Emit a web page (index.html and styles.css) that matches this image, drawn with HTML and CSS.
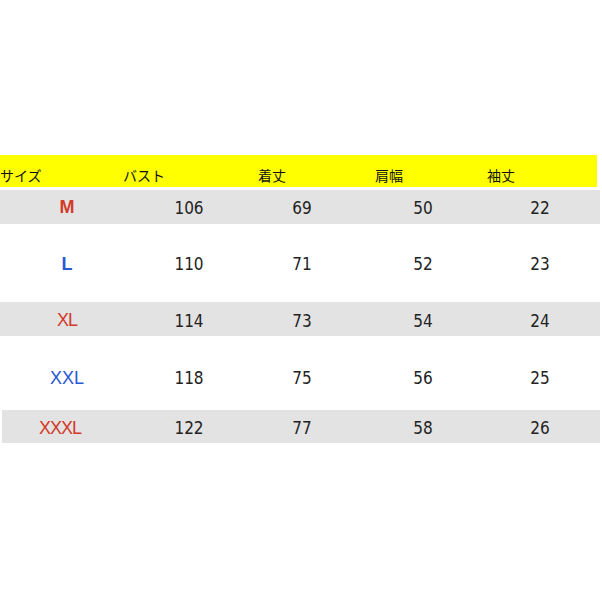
FILE: index.html
```html
<!DOCTYPE html>
<html lang="ja">
<head>
<meta charset="utf-8">
<link rel="stylesheet" href="styles.css">
</head>
<body>
<div class="sheet">
  <div class="head">
    <span class="h h1">サイズ</span>
    <span class="h h2">バスト</span>
    <span class="h h3">着丈</span>
    <span class="h h4">肩幅</span>
    <span class="h h5">袖丈</span>
  </div>
  <div class="row grey r-m">
    <span class="size red">M</span><span>106</span><span>69</span><span>50</span><span>22</span>
  </div>
  <div class="row white r-l">
    <span class="size blue">L</span><span>110</span><span>71</span><span>52</span><span>23</span>
  </div>
  <div class="row grey r-xl">
    <span class="size red">XL</span><span>114</span><span>73</span><span>54</span><span>24</span>
  </div>
  <div class="row white r-xxl">
    <span class="size blue">XXL</span><span>118</span><span>75</span><span>56</span><span>25</span>
  </div>
  <div class="row grey r-xxxl">
    <span class="size red">XXXL</span><span>122</span><span>77</span><span>58</span><span>26</span>
  </div>
</div>
</body>
</html>
```
FILE: styles.css
```css
html, body {
  margin: 0;
  padding: 0;
  background: #ffffff;
}
.sheet {
  padding-top: 155px;
  width: 602px;
}
.head {
  display: flex;
  align-items: center;
  width: 597px;
  height: 32px;
  box-sizing: border-box;
  padding-top: 7px;
  background: #ffff00;
  font-family: "Noto Sans CJK JP", sans-serif;
  font-size: 14px;
  color: #111;
  margin-bottom: 3px;
}
.h { display: block; }
.h1 { width: 123px; }
.h2 { width: 135px; }
.h3 { width: 117px; }
.h4 { width: 112px; }
.h5 { width: 100px; }
.row {
  display: grid;
  grid-template-columns: 134px 110px 116px 126px 108px;
  align-items: center;
  justify-items: center;
  width: 600px;
  font-family: "DejaVu Sans Condensed", "DejaVu Sans", sans-serif;
  font-size: 17px;
  color: #222;
  box-sizing: border-box;
}
.grey { background: #e3e3e3; }
.white { background: #ffffff; }
.r-m { height: 34px; padding-top: 1px; }
.r-l { height: 78px; padding-top: 2px; }
.r-xl { height: 34px; padding-top: 3px; }
.r-xxl { height: 74px; padding-top: 10px; }
.r-xxxl { height: 33px; margin-left: 2px; width: 598px; padding-top: 3px; grid-template-columns: 132px 110px 116px 126px 108px; }
.size {
  font-family: "Liberation Sans", sans-serif;
  font-size: 18px;
}
.red { color: #d23a2a; font-weight: bold; }
.blue { color: #2a58d6; }
.r-l .size { font-weight: bold; }
.r-xl .size, .r-xxxl .size { font-weight: normal; letter-spacing: -1px; }
.r-xxxl .size { margin-right: 16px; }
```
